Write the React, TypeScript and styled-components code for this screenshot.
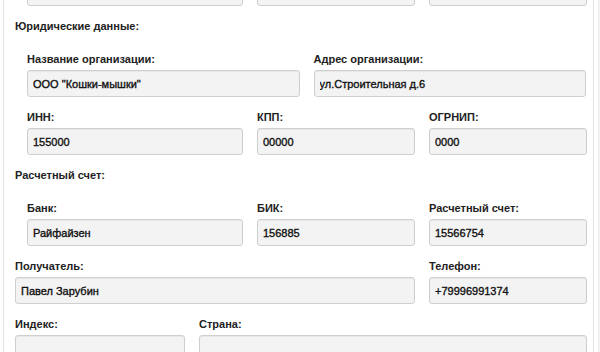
import { styled, createGlobalStyle } from "styled-components";

const GlobalStyle = createGlobalStyle`
  html, body {
    margin: 0;
    padding: 0;
    background: #fff;
    overflow: hidden;
  }

  body {
    font-family: "Liberation Sans", Arial, sans-serif;
    color: #333;
  }
`;

const Page = styled.div`
  width: 600px;
  height: 352px;
  overflow: hidden;
  box-sizing: border-box;
  padding-left: 3px;
  padding-right: 4px;
  border-right: 2px solid #f1f1f1;
`;

const Card = styled.div`
  margin-top: -37px;
  border: 1px solid #e2e2e2;
  border-radius: 4px;
  padding: 15px 7px 20px 11px;
  background: #fff;
`;

const Section = styled.div<{ $nested?: boolean }>`
  padding-left: ${(p) => (p.$nested ? "12px" : "0")};
`;

const SectionTitle = styled.div`
  font-size: 11px;
  line-height: 14px;
  font-weight: bold;
  color: #222;
  margin-bottom: 19px;
`;

const Row = styled.div<{ $cols: string }>`
  display: grid;
  grid-template-columns: ${(p) => p.$cols};
  column-gap: 14px;
`;

const FormGroup = styled.div`
  margin-bottom: 13px;
  min-width: 0;
`;

const Label = styled.label`
  display: block;
  font-size: 11px;
  line-height: 14px;
  font-weight: bold;
  color: #222;
  margin-bottom: 4px;
`;

const Input = styled.input`
  display: block;
  width: 100%;
  height: 27px;
  box-sizing: border-box;
  padding: 0 5px;
  border: 1px solid #cfcfcf;
  border-radius: 3px;
  background: #f3f3f3;
  box-shadow: inset 0 1px 1px rgba(0, 0, 0, 0.05);
  font-family: "Liberation Sans", Arial, sans-serif;
  font-size: 11px;
  font-weight: normal;
  -webkit-text-stroke: 0.35px #111;
  color: #111;
  outline: none;
`;

function Field({ label, value }: { label?: string; value?: string }) {
  return (
    <FormGroup>
      {label && <Label>{label}</Label>}
      <Input readOnly value={value ?? ""} />
    </FormGroup>
  );
}

const threeCols = "216px 158px 158px";

export default function App() {
  return (
    <>
      <GlobalStyle />
      <Page>
        <Card>
          <Section $nested>
            <Row $cols={threeCols}>
              <Field />
              <Field />
              <Field />
            </Row>
          </Section>

          <SectionTitle>Юридические данные:</SectionTitle>
          <Section $nested>
            <Row $cols="1fr 1fr">
              <Field label="Название организации:" value='ООО "Кошки-мышки"' />
              <Field label="Адрес организации:" value="ул.Строительная д.6" />
            </Row>
            <Row $cols={threeCols}>
              <Field label="ИНН:" value="155000" />
              <Field label="КПП:" value="00000" />
              <Field label="ОГРНИП:" value="0000" />
            </Row>
          </Section>

          <SectionTitle>Расчетный счет:</SectionTitle>
          <Section $nested>
            <Row $cols={threeCols}>
              <Field label="Банк:" value="Райфайзен" />
              <Field label="БИК:" value="156885" />
              <Field label="Расчетный счет:" value="15566754" />
            </Row>
          </Section>

          <Row $cols="400px 158px">
            <Field label="Получатель:" value="Павел Зарубин" />
            <Field label="Телефон:" value="+79996991374" />
          </Row>
          <Row $cols="170px 388px">
            <Field label="Индекс:" />
            <Field label="Страна:" />
          </Row>
        </Card>
      </Page>
    </>
  );
}
